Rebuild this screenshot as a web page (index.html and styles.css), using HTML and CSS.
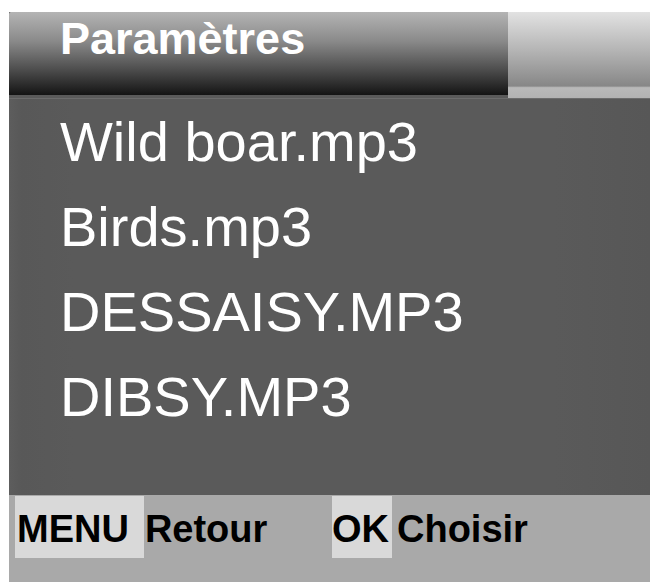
FILE: index.html
```html
<!DOCTYPE html>
<html lang="fr">
  <head>
    <meta charset="UTF-8" />
    <meta name="viewport" content="width=device-width, initial-scale=1.0" />
    <title>Paramètres</title>
    <link rel="stylesheet" href="styles.css">
  </head>
  <body>
    <div class="screen">
      <div class="title-bar">
        <div class="title">Paramètres</div>
        <div class="title-side"></div>
      </div>

      <ul class="file-list">
        <li>Wild boar.mp3</li>
        <li>Birds.mp3</li>
        <li>DESSAISY.MP3</li>
        <li>DIBSY.MP3</li>
      </ul>

      <div class="soft-keys">
        <div class="soft-key back">
          <span class="key">MENU</span>
          <span class="action">Retour</span>
        </div>
        <div class="soft-key ok">
          <span class="key">OK</span>
          <span class="action">Choisir</span>
        </div>
      </div>
    </div>
  </body>
</html>
```

FILE: styles.css
```css
* {
  box-sizing: border-box;
  margin: 0;
  padding: 0;
}

body {
  background: #ffffff;
  font-family: "Liberation Sans", Arial, sans-serif;
  padding: 12px 4px 5px 9px;
}

.screen {
  width: 641px;
  height: 570px;
  display: flex;
  flex-direction: column;
  background: #5a5a5a;
}

/* header: dark bevelled title plus lighter strip on the right */
.title-bar {
  height: 86px;
  display: flex;
  background: #5a5a5a;
}

.title {
  width: 499px;
  height: 83px;
  padding: 4px 0 0 51px;
  background: linear-gradient(#b4b4b4 0%, #8a8a8a 35%, #4c4c4c 70%, #141414 100%);
  border-radius: 2px 0 0 0;
  color: #ffffff;
  font-size: 45px;
  font-weight: bold;
  line-height: 45px;
}

.title-side {
  flex: 1;
  background: linear-gradient(#e2e2e2 0%, #b4b4b4 45%, #878787 86%, #b9b9b9 88%, #b2b2b2 100%);
}

.file-list {
  flex: 1;
  list-style: none;
  padding: 0 0 0 51px;
  border-top: 1px solid #6c6c6c;
  background: linear-gradient(90deg, #5d5d5d 0%, #585858 2%, #5a5a5a 10%, #5a5a5a 85%, #575757 100%);
  color: #ffffff;
  font-size: 56px;
  line-height: 85px;
}

/* bottom bar with the two soft-key hints */
.soft-keys {
  height: 87px;
  display: flex;
  padding: 1px 0 0 6px;
  background: #a9a9a9;
  color: #000000;
  font-size: 38px;
  font-weight: bold;
}

.soft-key {
  display: flex;
  height: 62px;
}

.soft-key.back {
  width: 317px;
}

.key {
  padding: 5px 15px 0 2px;
  background: #d9d9d9;
  line-height: 57px;
}

.action {
  padding: 5px 0 0 1px;
  line-height: 57px;
}

.ok .key {
  padding: 5px 3px 0 0;
}

.ok .action {
  padding-left: 5px;
}
```
